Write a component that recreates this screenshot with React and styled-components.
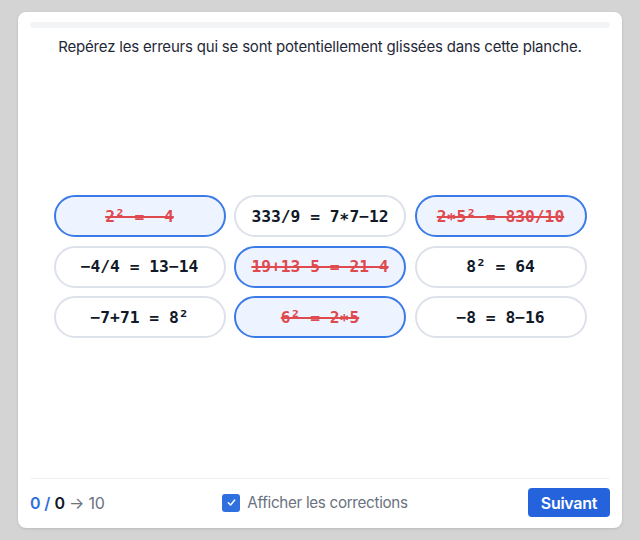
import styled, { createGlobalStyle } from "styled-components";

const GlobalStyle = createGlobalStyle`
  html, body {
    margin: 0;
    padding: 0;
    background: #d4d4d4;
    font-family: Inter, "Noto Sans", "Liberation Sans", sans-serif;
  }
`;

const cells = [
    {text: "2² = −4", wrong: true},
    {text: "333/9 = 7∗7−12", wrong: false},
    {text: "2∗5² = 830/10", wrong: true},
    {text: "−4/4 = 13−14", wrong: false},
    {text: "19+13−5 = 21−4", wrong: true},
    {text: "8² = 64", wrong: false},
    {text: "−7+71 = 8²", wrong: false},
    {text: "6² = 2∗5", wrong: true},
    {text: "−8 = 8−16", wrong: false},
];

const App = () => {
    return (
        <>
            <GlobalStyle/>
            <Page>
                <Card>
                    <Progress/>
                    <Instruction>Repérez les erreurs qui se sont potentiellement glissées dans cette planche.</Instruction>
                    <Board>
                        <Grid>
                            {cells.map((cell, index) => (
                                <Cell key={index} $selected={cell.wrong}>
                                    <Expr $wrong={cell.wrong}>{cell.text}</Expr>
                                </Cell>
                            ))}
                        </Grid>
                    </Board>
                    <Footer>
                        <Score>
                            <Blue>0 /</Blue> <Dark>0</Dark> <Muted>→ 10</Muted>
                        </Score>
                        <Toggle>
                            <Check>
                                <svg width="11" height="11" viewBox="0 0 12 12" fill="none">
                                    <path d="M2.5 6.3 L5 8.7 L9.5 3.3" stroke="#fff" strokeWidth="1.6"
                                          strokeLinecap="round" strokeLinejoin="round"/>
                                </svg>
                            </Check>
                            Afficher les corrections
                        </Toggle>
                        <Actions>
                            <NextBtn>Suivant</NextBtn>
                        </Actions>
                    </Footer>
                </Card>
            </Page>
        </>
    );
};

const Page = styled.div`
  padding: 12px 18px;
  height: 540px;
  box-sizing: border-box;
`;
const Card = styled.div`
  height: 516px;
  box-sizing: border-box;
  background: #fff;
  border-radius: 8px;
  box-shadow: 0 1px 3px rgba(0, 0, 0, 0.12);
  padding: 10px 12px 0 12px;
  display: flex;
  flex-direction: column;
`;
const Progress = styled.div`
  height: 6px;
  border-radius: 3px;
  background: #f3f4f6;
`;
const Instruction = styled.div`
  margin-top: 9px;
  text-align: center;
  font-size: 15px;
  letter-spacing: -0.2px;
  line-height: 20px;
  color: #1f2937;
`;
const Board = styled.div`
  flex: 1;
  display: flex;
  align-items: center;
  justify-content: center;
`;
const Grid = styled.div`
  width: 533px;
  display: grid;
  grid-template-columns: repeat(3, 1fr);
  column-gap: 8.5px;
  row-gap: 8.5px;
  margin-top: -2px;
`;
const Cell = styled.div`
  height: 42px;
  box-sizing: border-box;
  border-radius: 21px;
  display: flex;
  align-items: center;
  justify-content: center;
  border: 2px solid ${({$selected}) => $selected ? "#3b7be8" : "#dde1ea"};
  background: ${({$selected}) => $selected ? "#eef4ff" : "#fff"};
`;
const Expr = styled.span`
  font-family: "DejaVu Sans Mono", "Liberation Mono", monospace;
  font-weight: 700;
  font-size: 16.3px;
  white-space: pre;
  color: ${({$wrong}) => $wrong ? "#df4a4f" : "#111827"};
  text-decoration: ${({$wrong}) => $wrong ? "line-through" : "none"};
  text-decoration-thickness: 1.5px;
`;
const Footer = styled.div`
  border-top: 1px solid #eef0f3;
  padding: 9px 0 11px 0;
  display: grid;
  grid-template-columns: 1fr auto 1fr;
  align-items: center;
`;
const Score = styled.div`
  font-size: 16px;
  letter-spacing: -0.2px;
`;
const Blue = styled.span`
  color: #2f6fe0;
  font-weight: 600;
`;
const Dark = styled.span`
  color: #111827;
  font-weight: 600;
`;
const Muted = styled.span`
  color: #6b7280;
`;
const Toggle = styled.label`
  display: flex;
  align-items: center;
  gap: 7px;
  font-size: 15.2px;
  letter-spacing: -0.3px;
  color: #6b7280;
  margin-right: 10px;
`;
const Check = styled.span`
  width: 18px;
  height: 18px;
  border-radius: 3px;
  background: #2f6fe0;
  display: flex;
  align-items: center;
  justify-content: center;
`;
const Actions = styled.div`
  display: flex;
  justify-content: flex-end;
`;
const NextBtn = styled.button`
  height: 29px;
  padding: 0 13px;
  border: none;
  border-radius: 4px;
  background: #2563dc;
  color: #fff;
  font-family: Inter, "Noto Sans", sans-serif;
  font-size: 16px;
  letter-spacing: -0.3px;
  font-weight: 600;
`;

export default App;
